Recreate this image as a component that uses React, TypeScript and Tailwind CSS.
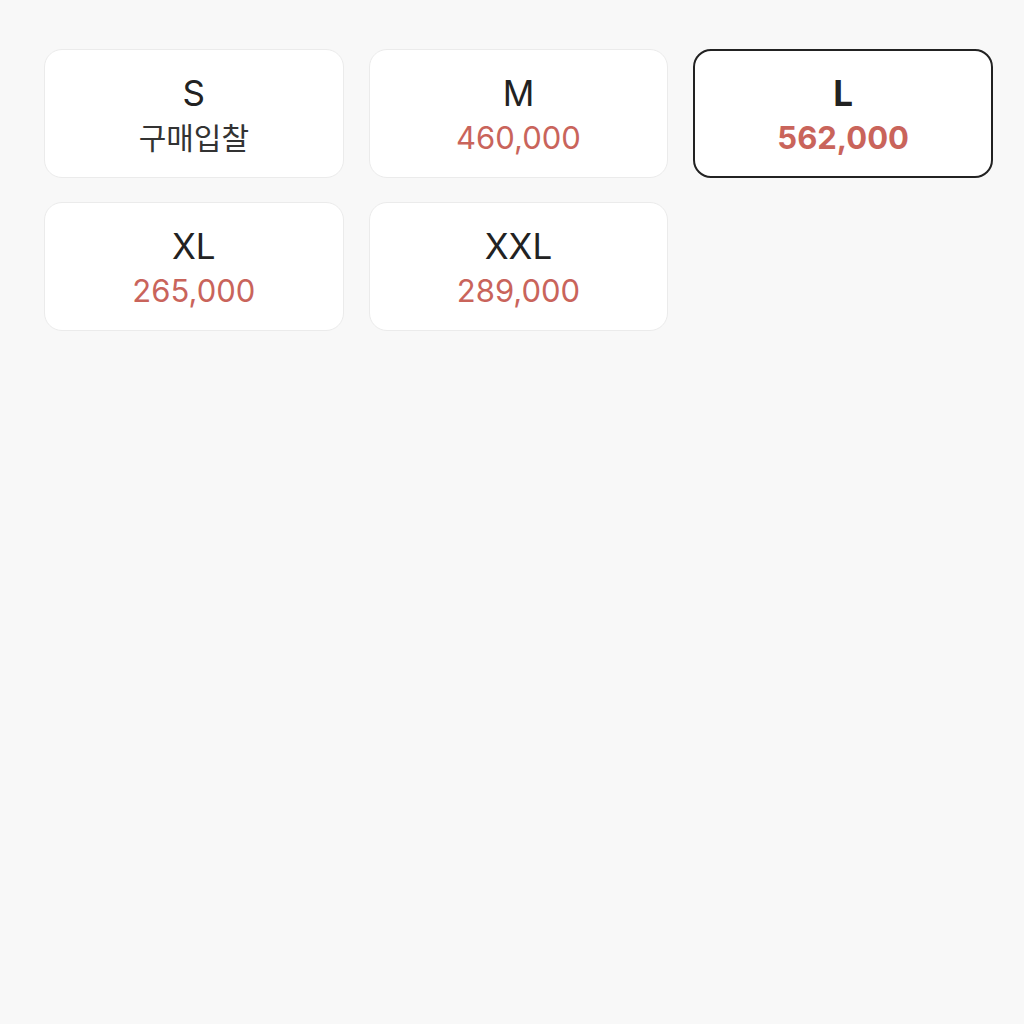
const sizes = [
  { size: 'S', price: null },
  { size: 'M', price: '460,000' },
  { size: 'L', price: '562,000', selected: true },
  { size: 'XL', price: '265,000' },
  { size: 'XXL', price: '289,000' },
]

export default function App() {
  return (
    <div className="min-h-screen w-full bg-[#f8f8f8] pt-[49px] pl-[44px]" style={{ fontFamily: 'Inter, "Noto Sans CJK KR", sans-serif' }}>
      <div className="grid w-[949px] grid-cols-3 gap-x-[25px] gap-y-[24px]">
        {sizes.map((s) => (
          <button
            key={s.size}
            className={`flex h-[129px] flex-col items-center justify-center rounded-[18px] bg-white pt-[5px] ${
              s.selected ? 'border-2 border-[#222]' : 'border border-[#ebebeb]'
            }`}
          >
            <div className={`text-[35px] leading-[44px] text-[#222] ${s.selected ? 'font-bold' : ''}`}>{s.size}</div>
            {s.price ? (
              <div className={`text-[31px] leading-[46px] text-[#c9645b] ${s.selected ? 'font-bold' : ''}`}>{s.price}</div>
            ) : (
              <div className="text-[30px] leading-[46px] text-[#333]">구매입찰</div>
            )}
          </button>
        ))}
      </div>
    </div>
  )
}
